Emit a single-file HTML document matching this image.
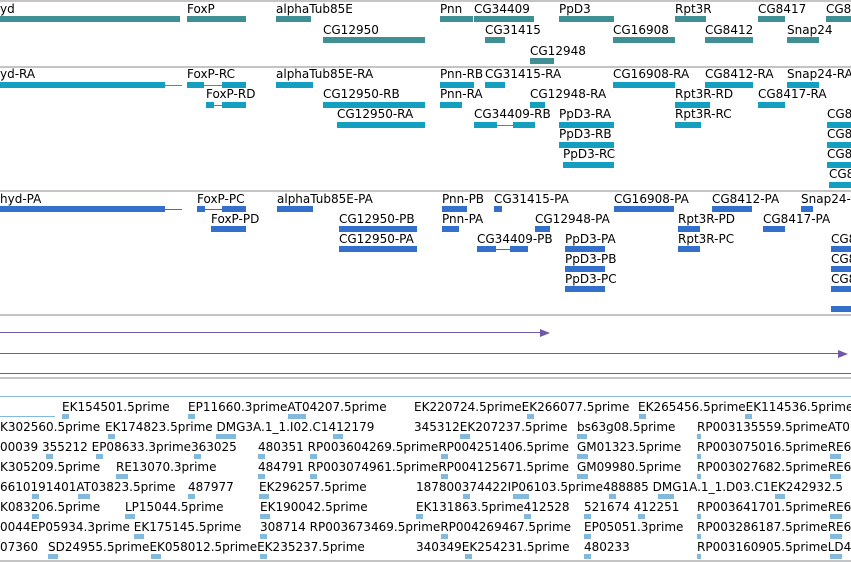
<!DOCTYPE html>
<html><head><meta charset="utf-8"><style>
body{margin:0;width:851px;height:562px;overflow:hidden;background:#fff;position:relative;font-family:"DejaVu Sans","Liberation Sans",sans-serif;font-size:12px;color:#000}
div{position:absolute}
.t{white-space:nowrap;line-height:14px}
.g{background:#c4c4c4;height:2px;left:0;width:851px}
.a{background:#3f8f94;height:6px}
.c{background:#129fc0;height:6px}
.d{background:#3370cc;height:6px}
.l1{background:#129fc0;height:1px}
.l2{background:#3370cc;height:1px}
.m{background:#84b9de;height:5px;width:7px}
.p{background:#7258a8;height:1px}
#bt{left:0;top:0;width:851px;height:562px;overflow:hidden}
</style></head><body>
<div class="g" style="top:0"></div>
<div class="g" style="top:66px"></div>
<div class="g" style="top:190px"></div>
<div class="g" style="top:314px"></div>
<div class="g" style="top:377px"></div>
<div class="g" style="top:560px"></div>
<div style="top:396px;left:0;width:851px;height:1px;background:#8ab8dc"></div>

<!-- track 1 -->
<div class="t" style="left:0;top:2px">yd</div><div class="a" style="left:0;top:16px;width:180px"></div>
<div class="t" style="left:187px;top:2px">FoxP</div><div class="a" style="left:187px;top:16px;width:59px"></div>
<div class="t" style="left:276px;top:2px">alphaTub85E</div><div class="a" style="left:276px;top:16px;width:35px"></div>
<div class="t" style="left:323px;top:23px">CG12950</div><div class="a" style="left:323px;top:37px;width:102px"></div>
<div class="t" style="left:440px;top:2px">Pnn</div><div class="a" style="left:440px;top:16px;width:33px"></div>
<div class="t" style="left:474px;top:2px">CG34409</div><div class="a" style="left:474px;top:16px;width:60px"></div>
<div class="t" style="left:485px;top:23px">CG31415</div><div class="a" style="left:485px;top:37px;width:20px"></div>
<div class="t" style="left:530px;top:44px">CG12948</div><div class="a" style="left:530px;top:58px;width:24px"></div>
<div class="t" style="left:559px;top:2px">PpD3</div><div class="a" style="left:559px;top:16px;width:55px"></div>
<div class="t" style="left:613px;top:23px">CG16908</div><div class="a" style="left:613px;top:37px;width:62px"></div>
<div class="t" style="left:675px;top:2px">Rpt3R</div><div class="a" style="left:675px;top:16px;width:31px"></div>
<div class="t" style="left:705px;top:23px">CG8412</div><div class="a" style="left:705px;top:37px;width:48px"></div>
<div class="t" style="left:758px;top:2px">CG8417</div><div class="a" style="left:758px;top:16px;width:27px"></div>
<div class="t" style="left:787px;top:23px">Snap24</div><div class="a" style="left:787px;top:37px;width:32px"></div>
<div class="t" style="left:826px;top:2px">CG8</div><div class="a" style="left:826px;top:16px;width:25px"></div>

<!-- track 2 -->
<div class="t" style="left:0;top:67px">yd-RA</div><div class="c" style="left:0;top:82px;width:165px"></div><div class="l1" style="left:165px;top:85px;width:17px"></div>
<div class="t" style="left:187px;top:67px">FoxP-RC</div><div class="c" style="left:187px;top:82px;width:17px"></div><div class="l1" style="left:204px;top:85px;width:18px"></div><div class="c" style="left:222px;top:82px;width:24px"></div>
<div class="t" style="left:276px;top:67px">alphaTub85E-RA</div><div class="c" style="left:276px;top:82px;width:37px"></div>
<div class="t" style="left:440px;top:67px">Pnn-RB</div><div class="c" style="left:440px;top:82px;width:34px"></div>
<div class="t" style="left:485px;top:67px">CG31415-RA</div><div class="c" style="left:485px;top:82px;width:20px"></div>
<div class="t" style="left:613px;top:67px">CG16908-RA</div><div class="c" style="left:613px;top:82px;width:62px"></div>
<div class="t" style="left:705px;top:67px">CG8412-RA</div><div class="c" style="left:705px;top:82px;width:48px"></div>
<div class="t" style="left:787px;top:67px">Snap24-RA</div><div class="c" style="left:787px;top:82px;width:32px"></div>
<div class="t" style="left:206px;top:87px">FoxP-RD</div><div class="c" style="left:206px;top:102px;width:8px"></div><div class="l1" style="left:214px;top:105px;width:8px"></div><div class="c" style="left:222px;top:102px;width:24px"></div>
<div class="t" style="left:323px;top:87px">CG12950-RB</div><div class="c" style="left:323px;top:102px;width:102px"></div>
<div class="t" style="left:440px;top:87px">Pnn-RA</div><div class="c" style="left:440px;top:102px;width:22px"></div>
<div class="t" style="left:530px;top:87px">CG12948-RA</div><div class="c" style="left:530px;top:102px;width:15px"></div>
<div class="t" style="left:675px;top:87px">Rpt3R-RD</div><div class="c" style="left:675px;top:102px;width:35px"></div>
<div class="t" style="left:758px;top:87px">CG8417-RA</div><div class="c" style="left:758px;top:102px;width:27px"></div>
<div class="t" style="left:337px;top:107px">CG12950-RA</div><div class="c" style="left:337px;top:122px;width:88px"></div>
<div class="t" style="left:474px;top:107px">CG34409-RB</div><div class="c" style="left:474px;top:122px;width:23px"></div><div class="l1" style="left:497px;top:125px;width:16px"></div><div class="c" style="left:513px;top:122px;width:22px"></div>
<div class="t" style="left:559px;top:107px">PpD3-RA</div><div class="c" style="left:559px;top:122px;width:55px"></div>
<div class="t" style="left:675px;top:107px">Rpt3R-RC</div><div class="c" style="left:675px;top:122px;width:26px"></div>
<div class="t" style="left:827px;top:107px">CG8</div><div class="c" style="left:827px;top:122px;width:24px"></div>
<div class="t" style="left:559px;top:127px">PpD3-RB</div><div class="c" style="left:559px;top:142px;width:55px"></div>
<div class="t" style="left:827px;top:127px">CG8</div><div class="c" style="left:827px;top:142px;width:24px"></div>
<div class="t" style="left:563px;top:147px">PpD3-RC</div><div class="c" style="left:563px;top:162px;width:51px"></div>
<div class="t" style="left:827px;top:147px">CG8</div><div class="c" style="left:827px;top:162px;width:24px"></div>
<div class="t" style="left:829px;top:167px">CG8</div><div class="c" style="left:829px;top:182px;width:22px"></div>

<!-- track 3 -->
<div class="t" style="left:0;top:192px">hyd-PA</div><div class="d" style="left:0;top:206px;width:165px"></div><div class="l2" style="left:165px;top:209px;width:17px"></div>
<div class="t" style="left:197px;top:192px">FoxP-PC</div><div class="d" style="left:197px;top:206px;width:8px"></div><div class="l2" style="left:205px;top:209px;width:17px"></div><div class="d" style="left:222px;top:206px;width:24px"></div>
<div class="t" style="left:277px;top:192px">alphaTub85E-PA</div><div class="d" style="left:277px;top:206px;width:36px"></div>
<div class="t" style="left:442px;top:192px">Pnn-PB</div><div class="d" style="left:442px;top:206px;width:25px"></div>
<div class="t" style="left:494px;top:192px">CG31415-PA</div><div class="d" style="left:494px;top:206px;width:8px"></div>
<div class="t" style="left:614px;top:192px">CG16908-PA</div><div class="d" style="left:614px;top:206px;width:60px"></div>
<div class="t" style="left:712px;top:192px">CG8412-PA</div><div class="d" style="left:712px;top:206px;width:40px"></div>
<div class="t" style="left:801px;top:192px">Snap24-</div><div class="d" style="left:801px;top:206px;width:12px"></div>
<div class="t" style="left:211px;top:212px">FoxP-PD</div><div class="d" style="left:211px;top:226px;width:35px"></div>
<div class="t" style="left:339px;top:212px">CG12950-PB</div><div class="d" style="left:339px;top:226px;width:78px"></div>
<div class="t" style="left:442px;top:212px">Pnn-PA</div><div class="d" style="left:442px;top:226px;width:17px"></div>
<div class="t" style="left:535px;top:212px">CG12948-PA</div><div class="d" style="left:535px;top:226px;width:15px"></div>
<div class="t" style="left:678px;top:212px">Rpt3R-PD</div><div class="d" style="left:678px;top:226px;width:22px"></div>
<div class="t" style="left:763px;top:212px">CG8417-PA</div><div class="d" style="left:763px;top:226px;width:22px"></div>
<div class="t" style="left:339px;top:232px">CG12950-PA</div><div class="d" style="left:339px;top:246px;width:78px"></div>
<div class="t" style="left:477px;top:232px">CG34409-PB</div><div class="d" style="left:477px;top:246px;width:19px"></div><div class="l2" style="left:496px;top:249px;width:14px"></div><div class="d" style="left:510px;top:246px;width:18px"></div>
<div class="t" style="left:565px;top:232px">PpD3-PA</div><div class="d" style="left:565px;top:246px;width:40px"></div>
<div class="t" style="left:678px;top:232px">Rpt3R-PC</div><div class="d" style="left:678px;top:246px;width:22px"></div>
<div class="t" style="left:831px;top:232px">CG8</div><div class="d" style="left:831px;top:246px;width:20px"></div>
<div class="t" style="left:565px;top:252px">PpD3-PB</div><div class="d" style="left:565px;top:266px;width:40px"></div>
<div class="t" style="left:831px;top:252px">CG8</div><div class="d" style="left:831px;top:266px;width:20px"></div>
<div class="t" style="left:565px;top:272px">PpD3-PC</div><div class="d" style="left:565px;top:286px;width:40px"></div>
<div class="t" style="left:831px;top:272px">CG8</div><div class="d" style="left:831px;top:286px;width:20px"></div>
<div class="d" style="left:831px;top:306px;width:20px"></div>

<!-- purple -->
<div class="p" style="left:0;top:332px;width:542px"></div><div style="left:540px;top:329px;width:0;height:0;border-top:4px solid transparent;border-bottom:4px solid transparent;border-left:10px solid #7258a8"></div>
<div class="p" style="left:0;top:353px;width:840px"></div><div style="left:838px;top:350px;width:0;height:0;border-top:4px solid transparent;border-bottom:4px solid transparent;border-left:10px solid #7258a8"></div>
<div class="p" style="left:0;top:373px;width:851px"></div>

<!-- bottom track -->
<div style="left:0;top:416px;width:55px;height:1px;background:#84b9de"></div>
<div id="bt">
<div class="t" style="left:62px;top:400px">EK154501.5prime</div>
<div class="t" style="left:188px;top:400px">EP11660.3primeAT04207.5prime</div>
<div class="t" style="left:414px;top:400px">EK220724.5primeEK266077.5prime</div>
<div class="t" style="left:638px;top:400px">EK265456.5primeEK114536.5prime</div>
<div class="t" style="left:0;top:420px">K302560.5prime</div>
<div class="t" style="left:105px;top:420px">EK174823.5prime DMG3A.1_1.I02.C1412179</div>
<div class="t" style="left:414px;top:420px">345312EK207237.5prime</div>
<div class="t" style="left:577px;top:420px">bs63g08.5prime</div>
<div class="t" style="left:697px;top:420px">RP003135559.5primeAT0</div>
<div class="t" style="left:0;top:440px">00039 355212 EP08633.3prime363025</div>
<div class="t" style="left:258px;top:440px">480351 RP003604269.5primeRP004251406.5prime</div>
<div class="t" style="left:577px;top:440px">GM01323.5prime</div>
<div class="t" style="left:697px;top:440px">RP003075016.5primeRE6</div>
<div class="t" style="left:0;top:460px">K305209.5prime</div>
<div class="t" style="left:116px;top:460px">RE13070.3prime</div>
<div class="t" style="left:258px;top:460px">484791 RP003074961.5primeRP004125671.5prime</div>
<div class="t" style="left:577px;top:460px">GM09980.5prime</div>
<div class="t" style="left:697px;top:460px">RP003027682.5primeRE6</div>
<div class="t" style="left:0;top:480px">6610191401AT03823.5prime</div>
<div class="t" style="left:188px;top:480px">487977</div>
<div class="t" style="left:259px;top:480px">EK296257.5prime</div>
<div class="t" style="left:416px;top:480px">187800374422IP06103.5prime488885 DMG1A.1_1.D03.C1EK242932.5</div>
<div class="t" style="left:0;top:500px">K083206.5prime</div>
<div class="t" style="left:125px;top:500px">LP15044.5prime</div>
<div class="t" style="left:260px;top:500px">EK190042.5prime</div>
<div class="t" style="left:416px;top:500px">EK131863.5prime412528</div>
<div class="t" style="left:584px;top:500px">521674 412251</div>
<div class="t" style="left:697px;top:500px">RP003641701.5primeRE6</div>
<div class="t" style="left:0;top:520px">0044EP05934.3prime EK175145.5prime</div>
<div class="t" style="left:260px;top:520px">308714 RP003673469.5primeRP004269467.5prime</div>
<div class="t" style="left:584px;top:520px">EP05051.3prime</div>
<div class="t" style="left:697px;top:520px">RP003286187.5primeRE6</div>
<div class="t" style="left:0;top:540px">07360</div>
<div class="t" style="left:48px;top:540px">SD24955.5primeEK058012.5primeEK235237.5prime</div>
<div class="t" style="left:416px;top:540px">340349EK254231.5prime</div>
<div class="t" style="left:584px;top:540px">480233</div>
<div class="t" style="left:697px;top:540px">RP003160905.5primeLD4</div>
</div>

<!-- markers -->
<div class="m" style="left:62px;top:414px"></div><div class="m" style="left:188px;top:414px"></div><div class="m" style="left:288px;top:414px;width:18px"></div><div class="m" style="left:527px;top:414px"></div><div class="m" style="left:639px;top:414px"></div><div class="m" style="left:745px;top:414px"></div>
<div class="m" style="left:108px;top:434px"></div><div class="m" style="left:216px;top:434px;width:20px"></div><div class="m" style="left:333px;top:434px;width:10px"></div><div class="m" style="left:460px;top:434px;width:10px"></div><div class="m" style="left:577px;top:434px;width:10px"></div><div class="m" style="left:697px;top:434px;width:4px"></div>
<div class="m" style="left:46px;top:454px"></div><div class="m" style="left:96px;top:454px"></div><div class="m" style="left:194px;top:454px"></div><div class="m" style="left:258px;top:454px"></div><div class="m" style="left:310px;top:454px"></div><div class="m" style="left:441px;top:454px"></div><div class="m" style="left:577px;top:454px;width:11px"></div><div class="m" style="left:697px;top:454px;width:4px"></div><div class="m" style="left:830px;top:454px;width:11px"></div>
<div class="m" style="left:116px;top:474px;width:12px"></div><div class="m" style="left:258px;top:474px"></div><div class="m" style="left:310px;top:474px"></div><div class="m" style="left:441px;top:474px"></div><div class="m" style="left:577px;top:474px;width:11px"></div><div class="m" style="left:697px;top:474px;width:4px"></div><div class="m" style="left:830px;top:474px;width:11px"></div>
<div class="m" style="left:32px;top:494px"></div><div class="m" style="left:78px;top:494px;width:12px"></div><div class="m" style="left:188px;top:494px"></div><div class="m" style="left:259px;top:494px;width:10px"></div><div class="m" style="left:463px;top:494px"></div><div class="m" style="left:513px;top:494px;width:16px"></div><div class="m" style="left:609px;top:494px"></div><div class="m" style="left:658px;top:494px;width:16px"></div><div class="m" style="left:775px;top:494px;width:10px"></div>
<div class="m" style="left:32px;top:514px"></div><div class="m" style="left:125px;top:514px;width:10px"></div><div class="m" style="left:260px;top:514px;width:10px"></div><div class="m" style="left:416px;top:514px"></div><div class="m" style="left:524px;top:514px"></div><div class="m" style="left:584px;top:514px"></div><div class="m" style="left:638px;top:514px"></div><div class="m" style="left:697px;top:514px;width:4px"></div><div class="m" style="left:830px;top:514px;width:12px"></div>
<div class="m" style="left:134px;top:534px;width:10px"></div><div class="m" style="left:260px;top:534px"></div><div class="m" style="left:441px;top:534px"></div><div class="m" style="left:584px;top:534px"></div><div class="m" style="left:697px;top:534px;width:4px"></div><div class="m" style="left:830px;top:534px;width:12px"></div>
<div class="m" style="left:48px;top:554px;width:10px"></div><div class="m" style="left:151px;top:554px;width:10px"></div><div class="m" style="left:260px;top:554px"></div><div class="m" style="left:465px;top:554px"></div><div class="m" style="left:584px;top:554px"></div><div class="m" style="left:697px;top:554px;width:4px"></div><div class="m" style="left:830px;top:554px;width:12px"></div>
</body></html>
